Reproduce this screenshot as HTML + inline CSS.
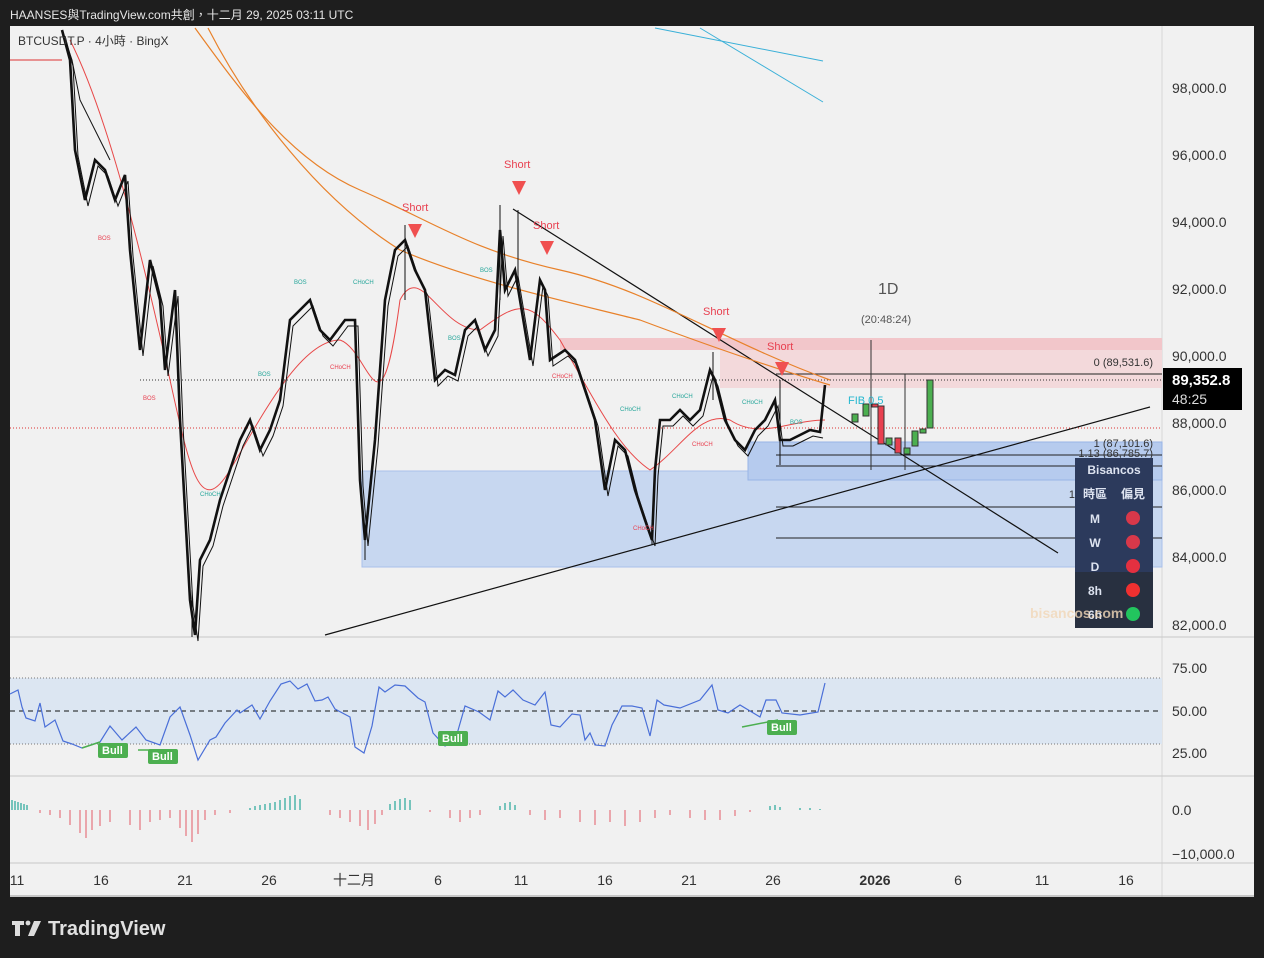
<!DOCTYPE html>
<html><head><meta charset="utf-8"><style>
html,body{margin:0;padding:0;background:#1e1e1e;width:1264px;height:958px;overflow:hidden}
svg{display:block}
text{font-family:"Liberation Sans","Noto Sans CJK TC",sans-serif}
</style></head><body>
<svg width="1264" height="958" viewBox="0 0 1264 958" xmlns="http://www.w3.org/2000/svg">
<rect width="1264" height="958" fill="#1e1e1e"/>
<text x="10" y="19" font-size="12" fill="#e6e6e6">HAANSES與TradingView.com共創，十二月 29, 2025 03:11 UTC</text>
<rect x="10" y="26" width="1244" height="871" fill="#f1f1f1"/>
<line x1="1162" y1="26" x2="1162" y2="897" stroke="#d8d8d8"/>
<line x1="10" y1="637" x2="1254" y2="637" stroke="#c8c8c8"/>
<line x1="10" y1="776" x2="1254" y2="776" stroke="#c8c8c8"/>
<line x1="10" y1="863" x2="1254" y2="863" stroke="#c8c8c8"/>
<line x1="10" y1="896" x2="1254" y2="896" stroke="#9a9a9a"/>
<rect x="362" y="471" width="800" height="96" fill="#c7d7f0" stroke="#a9c0ea"/>
<rect x="748" y="442" width="414" height="38" fill="#b6cbee" stroke="#98b4e6"/>
<rect x="560" y="338" width="602" height="12" fill="#f2c6ca"/>
<rect x="720" y="350" width="442" height="38" fill="#f3d9db"/>
<line x1="776" y1="374" x2="1162" y2="374" stroke="#222"/>
<line x1="140" y1="380" x2="1162" y2="380" stroke="#333" stroke-dasharray="1,2"/>
<line x1="10" y1="428" x2="1162" y2="428" stroke="#d33" stroke-dasharray="1,2"/>
<line x1="776" y1="455" x2="1162" y2="455" stroke="#222"/>
<line x1="776" y1="466" x2="1162" y2="466" stroke="#222"/>
<line x1="776" y1="507" x2="1162" y2="507" stroke="#222"/>
<line x1="776" y1="538" x2="1162" y2="538" stroke="#222"/>
<line x1="325" y1="635" x2="1150" y2="407" stroke="#111" stroke-width="1.2"/>
<line x1="513" y1="209" x2="1058" y2="553" stroke="#111" stroke-width="1.2"/>
<line x1="655" y1="28" x2="823" y2="61" stroke="#3ab0d8"/>
<line x1="700" y1="28" x2="823" y2="102" stroke="#3ab0d8"/>
<line x1="10" y1="60" x2="62" y2="60" stroke="#d33"/>
<path d="M195,28 C240,90 290,160 360,190 C430,220 470,250 560,270 C650,290 720,340 830,380" fill="none" stroke="#e8812a" stroke-width="1.2"/>
<path d="M208,28 C250,110 320,200 400,250 C470,280 560,300 640,320 C720,350 780,370 830,385" fill="none" stroke="#e8812a" stroke-width="1.2"/>
<path d="M70,40 C100,100 130,200 170,380 C190,470 200,520 230,470 C260,420 300,340 340,340 C370,350 380,450 400,300 C420,260 440,330 480,330 C520,300 530,300 560,340 C600,410 620,450 650,470 C680,450 700,410 730,420 C760,440 790,420 825,420" fill="none" stroke="#e84848" stroke-width="1"/>
<path d="M62,30 L72,60 L80,100 L95,130 L110,160" fill="none" stroke="#111" stroke-width="1"/>
<polyline fill="none" stroke="#111" stroke-width="2.6" points="62,30 70,60 75,150 85,200 95,160 105,170 115,200 125,175 130,250 140,350 150,260 160,300 165,370 175,290 180,420 190,600 195,635 200,560 210,540 220,500 230,470 240,440 250,420 260,450 270,430 280,400 290,320 300,310 310,300 320,330 330,340 345,320 355,320 360,480 365,540 375,440 385,300 395,250 405,240 415,270 425,290 435,380 445,370 455,375 465,330 475,320 485,350 495,330 500,230 505,290 515,270 520,300 530,360 540,280 545,290 550,360 565,350 575,360 585,390 595,420 605,490 615,440 625,450 635,490 645,520 652,540 655,470 660,420 670,420 680,410 690,420 700,410 710,370 715,380 725,420 735,440 745,450 755,430 765,420 775,400 780,440 790,440 800,435 810,430 820,432 825,385"/>
<polyline fill="none" stroke="#111" stroke-width="1" transform="translate(3,6)" points="62,30 70,60 75,150 85,200 95,160 105,170 115,200 125,175 130,250 140,350 150,260 160,300 165,370 175,290 180,420 190,600 195,635 200,560 210,540 220,500 230,470 240,440 250,420 260,450 270,430 280,400 290,320 300,310 310,300 320,330 330,340 345,320 355,320 360,480 365,540 375,440 385,300 395,250 405,240 415,270 425,290 435,380 445,370 455,375 465,330 475,320 485,350 495,330 500,230 505,290 515,270 520,300 530,360 540,280 545,290 550,360 565,350 575,360 585,390 595,420 605,490 615,440 625,450 635,490 645,520 652,540 655,470 660,420 670,420 680,410 690,420 700,410 710,370 715,380 725,420 735,440 745,450 755,430 765,420 775,400 780,440 790,440 800,435 810,430 820,432"/>
<g stroke="#111" stroke-width="1">
<line x1="500" y1="205" x2="500" y2="300"/><line x1="518" y1="210" x2="518" y2="290"/><line x1="405" y1="225" x2="405" y2="300"/>
<line x1="192" y1="590" x2="192" y2="637"/><line x1="365" y1="530" x2="365" y2="560"/><line x1="652" y1="520" x2="652" y2="545"/>
<line x1="713" y1="352" x2="713" y2="400"/><line x1="780" y1="380" x2="780" y2="465"/>
</g>
<g stroke="#333" stroke-width="1">
<line x1="871" y1="340" x2="871" y2="470"/><line x1="905" y1="374" x2="905" y2="470"/>
<rect x="852" y="414" width="6" height="8" fill="#4caf50"/>
<rect x="863" y="404" width="6" height="12" fill="#4caf50"/>
<rect x="872" y="404" width="6" height="3" fill="#e84050"/>
<rect x="878" y="406" width="6" height="38" fill="#e84050"/>
<rect x="886" y="438" width="6" height="7" fill="#4caf50"/>
<rect x="895" y="438" width="6" height="15" fill="#e84050"/>
<rect x="904" y="448" width="6" height="6" fill="#4caf50"/>
<rect x="912" y="431" width="6" height="15" fill="#4caf50"/>
<rect x="920" y="429" width="6" height="4" fill="#4caf50"/>
<rect x="927" y="380" width="6" height="48" fill="#4caf50"/>
</g>
<text x="848" y="404" font-size="11" fill="#27b8d0">FIB 0.5</text>
<g font-size="11" fill="#e84050">
<text x="402" y="211">Short</text><text x="504" y="168">Short</text><text x="533" y="229">Short</text><text x="703" y="315">Short</text><text x="767" y="350">Short</text>
</g>
<g fill="#f05050">
<path d="M408,224h14l-7,14z"/><path d="M512,181h14l-7,14z"/><path d="M540,241h14l-7,14z"/><path d="M712,328h14l-7,14z"/><path d="M775,362h14l-7,14z"/>
</g>
<g font-size="6" fill="#26a69a"><text x="294" y="284">BOS</text><text x="353" y="284">CHoCH</text><text x="258" y="376">BOS</text><text x="448" y="340">BOS</text><text x="480" y="272">BOS</text><text x="620" y="411">CHoCH</text><text x="672" y="398">CHoCH</text><text x="742" y="404">CHoCH</text><text x="790" y="424">BOS</text><text x="200" y="496">CHoCH</text></g>
<g font-size="6" fill="#e84050"><text x="98" y="240">BOS</text><text x="143" y="400">BOS</text><text x="330" y="369">CHoCH</text><text x="552" y="378">CHoCH</text><text x="692" y="446">CHoCH</text><text x="633" y="530">CHoCH</text></g>
<text x="878" y="294" font-size="16" fill="#555">1D</text>
<text x="861" y="323" font-size="11" fill="#555">(20:48:24)</text>
<g font-size="11" fill="#333" text-anchor="end"><text x="1153" y="366">0 (89,531.6)</text><text x="1153" y="447">1 (87,101.6)</text><text x="1153" y="457">1.13 (86,785.7)</text><text x="1078" y="498">1.</text></g>
<rect x="1075" y="458" width="78" height="170" fill="#2c3a5c"/>
<rect x="1075" y="572" width="78" height="56" fill="#283040"/>
<g font-size="12" font-weight="bold" fill="#dde3f0" text-anchor="middle">
<text x="1114" y="474">Bisancos</text><text x="1095" y="498">時區</text><text x="1133" y="498">偏見</text>
<text x="1095" y="523">M</text><text x="1095" y="547">W</text><text x="1095" y="571">D</text><text x="1095" y="595">8h</text><text x="1095" y="619">6h</text></g>
<g><circle cx="1133" cy="518" r="7" fill="#d8384a"/><circle cx="1133" cy="542" r="7" fill="#d8384a"/><circle cx="1133" cy="566" r="7" fill="#e43040"/><circle cx="1133" cy="590" r="7" fill="#f03030"/><circle cx="1133" cy="614" r="7" fill="#22c55e"/></g>
<text x="1030" y="618" font-size="14" font-weight="bold" fill="#f2d8b8" opacity="0.8">bisancos.com</text>
<g font-size="14" fill="#333"><text x="1172" y="93">98,000.0</text><text x="1172" y="160">96,000.0</text><text x="1172" y="227">94,000.0</text><text x="1172" y="294">92,000.0</text><text x="1172" y="361">90,000.0</text><text x="1172" y="428">88,000.0</text><text x="1172" y="495">86,000.0</text><text x="1172" y="562">84,000.0</text><text x="1172" y="630">82,000.0</text>
<text x="1172" y="673">75.00</text><text x="1172" y="716">50.00</text><text x="1172" y="758">25.00</text><text x="1172" y="815">0.0</text><text x="1172" y="859">−10,000.0</text></g>
<rect x="1163" y="368" width="79" height="42" fill="#000"/>
<text x="1172" y="385" font-size="15" font-weight="bold" fill="#fff">89,352.8</text>
<text x="1172" y="404" font-size="14" fill="#ddd">48:25</text>
<text x="18" y="45" font-size="12" fill="#333">BTCUSDT.P · 4小時 · BingX</text>
<rect x="10" y="678" width="1152" height="66" fill="#dce6f2"/>
<line x1="10" y1="678" x2="1162" y2="678" stroke="#777" stroke-dasharray="1,2"/>
<line x1="10" y1="744" x2="1162" y2="744" stroke="#777" stroke-dasharray="1,2"/>
<line x1="10" y1="711" x2="1162" y2="711" stroke="#111" stroke-dasharray="5,4"/>
<polyline fill="none" stroke="#4a6fd8" stroke-width="1.2" points="10,694 18,690 22,707 26,718 35,721 40,703 45,727 55,720 63,741 72,744 82,748 100,742 110,726 122,740 136,727 146,740 160,745 170,717 180,707 190,735 198,760 210,740 216,737 225,723 237,710 240,713 252,705 260,719 270,701 281,684 290,681 298,689 307,684 315,701 322,700 328,697 335,709 350,717 355,747 364,753 372,726 379,687 385,692 395,685 405,686 418,698 425,702 433,733 445,746 455,741 465,706 479,712 490,720 498,691 505,697 513,690 523,700 535,705 545,692 551,725 560,727 572,714 580,715 585,740 590,733 595,745 605,746 612,725 622,706 632,706 642,708 650,736 657,700 664,705 680,708 700,700 712,685 718,710 728,713 740,705 760,717 766,700 776,700 782,713 800,715 818,712 825,683"/>
<polyline fill="none" stroke="#4caf50" stroke-width="1.5" points="82,748 100,742"/><polyline fill="none" stroke="#4caf50" stroke-width="1.5" points="138,750 160,750"/><polyline fill="none" stroke="#4caf50" stroke-width="1.5" points="742,727 778,720"/>
<g font-size="11" font-weight="bold" fill="#fff">
<rect x="98" y="743" width="30" height="15" rx="2" fill="#4caf50"/><text x="102" y="754">Bull</text>
<rect x="148" y="749" width="30" height="15" rx="2" fill="#4caf50"/><text x="152" y="760">Bull</text>
<rect x="438" y="731" width="30" height="15" rx="2" fill="#4caf50"/><text x="442" y="742">Bull</text>
<rect x="767" y="720" width="30" height="15" rx="2" fill="#4caf50"/><text x="771" y="731">Bull</text></g>
<path d="M12,800 L12,810 M15,801 L15,810 M18,802 L18,810 M21,803 L21,810 M24,804 L24,810 M27,805 L27,810 M250,808 L250,810 M255,806 L255,810 M260,805 L260,810 M265,804 L265,810 M270,803 L270,810 M275,802 L275,810 M280,800 L280,810 M285,798 L285,810 M290,796 L290,810 M295,795 L295,810 M300,799 L300,810 M390,804 L390,810 M395,801 L395,810 M400,799 L400,810 M405,798 L405,810 M410,800 L410,810 M500,806 L500,810 M505,803 L505,810 M510,802 L510,810 M515,805 L515,810 M770,806 L770,810 M775,805 L775,810 M780,807 L780,810 M800,808 L800,810 M810,808 L810,810 M820,809 L820,810" stroke="#26a69a" stroke-width="1.2"/>
<path d="M40,810 L40,813 M50,810 L50,815 M60,810 L60,818 M70,810 L70,825 M80,810 L80,833 M86,810 L86,838 M92,810 L92,830 M100,810 L100,826 M110,810 L110,822 M130,810 L130,825 M140,810 L140,830 M150,810 L150,822 M160,810 L160,820 M170,810 L170,818 M180,810 L180,828 M186,810 L186,836 M192,810 L192,842 M198,810 L198,834 M205,810 L205,820 M215,810 L215,815 M230,810 L230,813 M330,810 L330,815 M340,810 L340,818 M350,810 L350,822 M360,810 L360,826 M368,810 L368,830 M375,810 L375,824 M382,810 L382,815 M430,810 L430,812 M450,810 L450,818 M460,810 L460,822 M470,810 L470,818 M480,810 L480,815 M530,810 L530,815 M545,810 L545,820 M560,810 L560,818 M580,810 L580,822 M595,810 L595,825 M610,810 L610,822 M625,810 L625,826 M640,810 L640,822 M655,810 L655,818 M670,810 L670,815 M690,810 L690,818 M705,810 L705,820 M720,810 L720,820 M735,810 L735,816 M750,810 L750,812" stroke="#e04050" stroke-width="1.2" opacity="0.7"/>
<g font-size="14" fill="#333" text-anchor="middle"><text x="17" y="885">11</text><text x="101" y="885">16</text><text x="185" y="885">21</text><text x="269" y="885">26</text><text x="354" y="885">十二月</text><text x="438" y="885">6</text><text x="521" y="885">11</text><text x="605" y="885">16</text><text x="689" y="885">21</text><text x="773" y="885">26</text><text x="875" y="885" font-weight="bold">2026</text><text x="958" y="885">6</text><text x="1042" y="885">11</text><text x="1126" y="885">16</text></g>
<g fill="#dcdcdc"><path d="M12,921h12v4h-4v11h-5v-11h-3z"/><circle cx="28" cy="923" r="2.4"/><path d="M34,921h7l-7,15h-6z"/></g>
<text x="48" y="935" font-size="20" font-weight="bold" fill="#e0e0e0">TradingView</text>
</svg>
</body></html>
